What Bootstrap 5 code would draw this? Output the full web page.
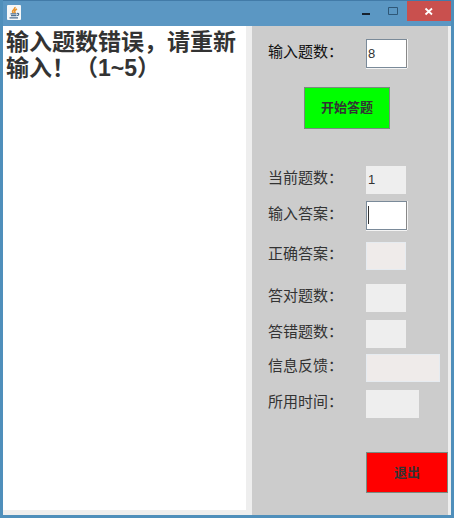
<!DOCTYPE html>
<html lang="zh-CN">
<head>
<meta charset="utf-8">
<meta name="viewport" content="width=device-width, initial-scale=1">
<title>答题</title>
<link rel="stylesheet" href="https://cdn.jsdelivr.net/npm/bootstrap@5.3.0/dist/css/bootstrap.min.css">
<style>
body { font-family: "Liberation Sans", "Noto Sans CJK SC", sans-serif; background: #5b97c3; }
.win { border: 3px solid #4f8fbb; border-top: 0; background: #5b97c3; }
.titlebar { height: 26px; border-top: 1px solid #427ba8; }
.win-btn { width: 27px; height: 20px; line-height: 0; }
.win-close { width: 44px; background: #c9504e; }
.client { background: #eee; min-height: 0; }
.message { resize: none; font-size: 23px; line-height: 26px; font-weight: 700; color: #333; padding: 3px; margin-bottom: 5px; outline: 0; background: #fff; overflow: hidden; }
.left-pane { flex: 0 0 243px; }
.side { background: #ccc; margin: 0 3px 0 6px; padding-top: 13px; min-width: 0; }
.field-row { height: 29px; padding-left: 16px; margin-bottom: 7px; }
.field-row label { width: 98px; font-size: 15px; line-height: 20px; padding-bottom: 3px; color: #333; flex: none; }
.field-row .first-label { color: #111; }
.field-row input { width: 40px; height: 28px; border: 0; border-radius: 0; padding: 0 2px; font-size: 13px; color: #333; background: #eee; outline: 0; }
.field-row input.editable { width: 41px; height: 29px; background: #fff; border: 1px solid #7a8a99; border-right-color: #888; box-shadow: 0 1px #f4f4f4, 1px 0 #f4f4f4; padding: 0 1px; }
.field-row input.tint { background: #efebea; border: 1px solid #e6ebf0; }
.field-row input.w-feedback { width: 74px; }
.field-row input.w-time { width: 53px; }
.caret-host { position: relative; }
.caret-host::after { content: ""; position: absolute; left: 2px; top: 5px; width: 1px; height: 18px; background: #333; }
.act { border: 1px solid #7a8a80; border-radius: 0; font-size: 13px; font-weight: 700; color: #333; padding: 0; }
.act-start { width: 86px; height: 42px; background: #0f0; margin: 19px 0 36px 52px; }
.act-exit { width: 82px; height: 41px; background: #f00; margin-top: 27px; }
.gap-m { margin-bottom: 11px; }
.gap-l { margin-bottom: 13px; }
.gap-s { margin-bottom: 5px; }
</style>
<script src="https://cdn.jsdelivr.net/npm/bootstrap@5.3.0/dist/js/bootstrap.bundle.min.js"></script>
</head>
<body>
<div class="win d-flex flex-column vh-100">
  <header class="titlebar d-flex align-items-start justify-content-between">
    <svg class="ms-1 mt-1" width="14" height="15" viewBox="0 0 14 15" aria-hidden="true">
      <rect width="14" height="15" rx="1" fill="#f5f7f8"/>
      <path d="M6.500 8C3.500 6 8.500 4.500 8 2M8.500 8C6.500 6.500 8 5 10 4" fill="none" stroke="#e8952f" stroke-width="1.600"/>
      <path d="M3.500 8.800h6M4 10.700h5.500M2.500 12.800h8.500M10 8.500c2.500-.5 2 2 0 2" fill="none" stroke="#4f6f90" stroke-width="1.200"/>
    </svg>
    <div class="d-flex">
      <button type="button" class="win-btn btn p-0 border-0 rounded-0" aria-label="最小化"><svg width="27" height="20"><path d="M9 13h8" stroke="#17222e" stroke-width="2"/></svg></button>
      <button type="button" class="win-btn btn p-0 border-0 rounded-0" aria-label="最大化" disabled><svg width="27" height="20"><path d="M8.500 6.500h9v7h-9z" fill="none" stroke="#17364f"/></svg></button>
      <button type="button" class="win-btn win-close btn p-0 border-0 rounded-0" aria-label="关闭"><svg width="44" height="20"><path d="M18.500 7.500l6.500 6M25 7.500l-6.500 6" stroke="#fff" stroke-width="1.800"/></svg></button>
    </div>
  </header>
  <main class="client d-flex flex-grow-1">
    <div class="left-pane d-flex">
      <textarea class="message border-0 w-100" readonly aria-label="提示信息">输入题数错误，请重新输入！（1~5）</textarea>
    </div>
    <form class="side flex-grow-1 d-flex flex-column">
      <div class="field-row d-flex align-items-center mb-0"><label class="first-label" for="count">输入题数：</label><input class="editable" id="count" type="text" value="8"></div>
      <button type="button" class="act act-start flex-shrink-0">开始答题</button>
      <div class="field-row d-flex align-items-center"><label for="current">当前题数：</label><input id="current" type="text" value="1" readonly></div>
      <div class="field-row d-flex align-items-center gap-m"><label for="answer">输入答案：</label><span class="caret-host d-flex"><input class="editable" id="answer" type="text"></span></div>
      <div class="field-row d-flex align-items-center gap-l"><label for="correct">正确答案：</label><input class="tint" id="correct" type="text" readonly></div>
      <div class="field-row d-flex align-items-center"><label for="right">答对题数：</label><input id="right" type="text" readonly></div>
      <div class="field-row d-flex align-items-center gap-s"><label for="wrong">答错题数：</label><input id="wrong" type="text" readonly></div>
      <div class="field-row d-flex align-items-center"><label for="feedback">信息反馈：</label><input class="tint w-feedback" id="feedback" type="text" readonly></div>
      <div class="field-row d-flex align-items-center"><label for="time">所用时间：</label><input class="w-time" id="time" type="text" readonly></div>
      <button type="button" class="act act-exit flex-shrink-0 align-self-end">退出</button>
    </form>
  </main>
</div>
</body>
</html>
